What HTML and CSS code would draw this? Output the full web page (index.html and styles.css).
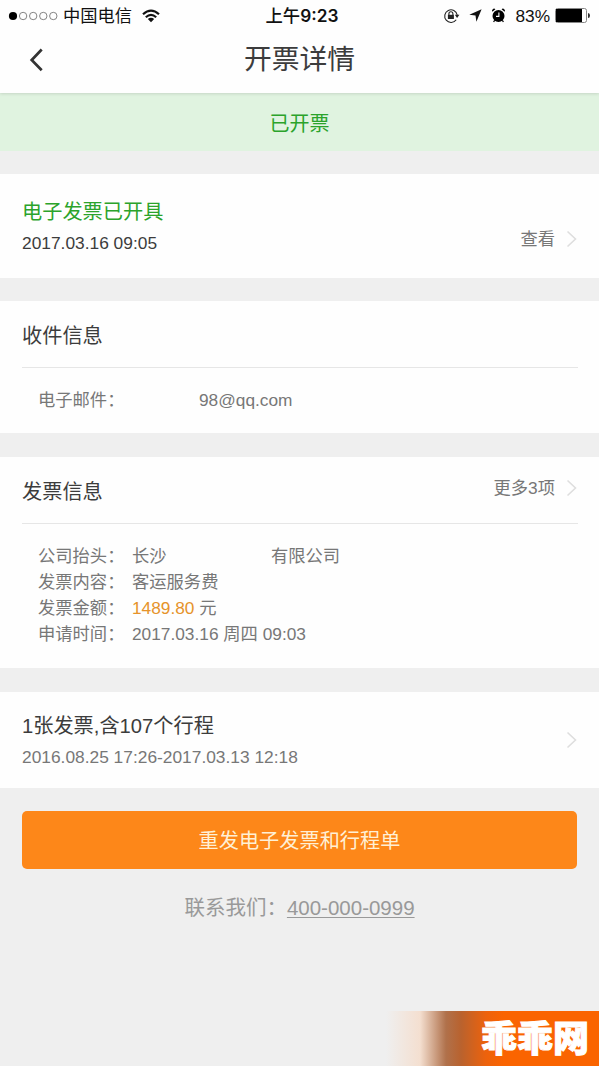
FILE: index.html
```html
<!DOCTYPE html>
<html lang="zh-CN">
<head>
<meta charset="utf-8">
<title>开票详情</title>
<link rel="stylesheet" href="styles.css">
</head>
<body>
<header class="header">
  <div class="status">
    <div class="status-left">
      <svg class="signal" width="50" height="10" viewBox="0 0 50 10"><circle cx="5" cy="5" r="4.1"/><g fill="none" stroke="#666" stroke-width=".8"><circle cx="15.1" cy="5" r="3.7"/><circle cx="25.2" cy="5" r="3.7"/><circle cx="35.3" cy="5" r="3.7"/><circle cx="45.3" cy="5" r="3.7"/></g></svg>
      <span class="carrier">中国电信</span>
      <svg class="wifi" width="18" height="14" viewBox="0 0 18 14" fill="none" stroke="#111" stroke-width="2.2"><path d="M1 5.2Q9-2 17 5.2M3.8 8.2Q9 3.6 14.2 8.2"/><path d="M5.8 10.1Q9 7.2 12.2 10.1L9 13.3Z" fill="#111" stroke="none"/></svg>
    </div>
    <div class="time">上午<b>9:23</b></div>
    <div class="status-right">
      <svg width="17" height="16" viewBox="0 0 17 16" fill="none" stroke="#222"><path d="M13.2 11.7A6.3 6.3 0 1 1 14.2 7" stroke-width="1.1"/><path d="M11.8 6.7H16.4L14.1 10Z" fill="#222" stroke="none"/><path d="M5.9 7V5.7a2 2 0 0 1 4 0V7" stroke-width="1.1"/><rect x="4.9" y="6.8" width="6" height="4.2" fill="#222" stroke="none"/></svg>
      <svg class="arrow" width="13" height="13" viewBox="0 0 13 13"><path d="M12.6.3L7.4 12.7L6.5 6.6L.3 5.7Z" fill="#111"/></svg>
      <svg class="alarm" width="15" height="15" viewBox="0 0 15 15"><circle cx="7.5" cy="8" r="6"/><path d="M1.4 3.8A2 2 0 0 1 4.4 1.2ZM13.6 3.8A2 2 0 0 0 10.6 1.2Z"/><path d="M3.6 12.4L2.6 14M11.4 12.4l1 1.6" stroke="#000" stroke-width="1.2"/><path d="M7.9 4.5V8.4H5" fill="none" stroke="#fff" stroke-width="1.1"/></svg>
      <span class="percent">83%</span>
      <svg class="battery" width="36" height="15" viewBox="0 0 36 15"><rect x=".5" y=".5" width="31" height="14" rx="2" fill="#fff" stroke="#888"/><path d="M1 1H27V14H1Z"/><path d="M33 5q2 0 2 2.5T33 10Z" fill="#333"/></svg>
    </div>
  </div>
  <div class="nav">
    <svg class="back" width="15" height="24" viewBox="0 0 15 24" fill="none" stroke="#333" stroke-width="2.7"><path d="M12.7 1.5L2.7 12L12.7 22.2"/></svg>
    <h1 class="title">开票详情</h1>
  </div>
</header>
<div class="banner">已开票</div>
<main>
  <section class="card issued">
    <div>
      <div class="heading green">电子发票已开具</div>
      <div class="date">2017.03.16 09:05</div>
    </div>
    <div class="link">查看<svg class="chev" width="12" height="18" viewBox="0 0 12 18"><path d="M1.5 1.5L9.5 9L1.5 16.5"/></svg></div>
  </section>
  <section class="card receiver">
    <div class="card-head"><div class="heading">收件信息</div></div>
    <div class="row"><span class="label">电子邮件：</span><span class="mail">98@qq.com</span></div>
  </section>
  <section class="card invoice">
    <div class="card-head"><div class="heading">发票信息</div><div class="link">更多3项<svg class="chev" width="12" height="18" viewBox="0 0 12 18"><path d="M1.5 1.5L9.5 9L1.5 16.5"/></svg></div></div>
    <div class="rows">
      <div class="row"><span class="label">公司抬头：</span><span class="city">长沙</span><span>有限公司</span></div>
      <div class="row"><span class="label">发票内容：</span><span>客运服务费</span></div>
      <div class="row"><span class="label">发票金额：</span><span><span class="amount">1489.80</span> 元</span></div>
      <div class="row"><span class="label">申请时间：</span><span>2017.03.16 周四 09:03</span></div>
    </div>
  </section>
  <section class="card trips">
    <div>
      <div class="heading">1张发票,含107个行程</div>
      <div class="date muted">2016.08.25 17:26-2017.03.13 12:18</div>
    </div>
    <svg class="chev" width="12" height="18" viewBox="0 0 12 18"><path d="M1.5 1.5L9.5 9L1.5 16.5"/></svg>
  </section>
  <button class="resend">重发电子发票和行程单</button>
  <p class="contact">联系我们：<a class="phone">400-000-0999</a></p>
</main>
<div class="watermark">乖乖网</div>
</body>
</html>
```
FILE: styles.css
```css
* { box-sizing: border-box; }
body {
  margin: 0;
  height: 1066px;
  position: relative;
  overflow: hidden;
  background: #efefef;
  color: #3c3c3c;
  font-family: "Liberation Sans", "Noto Sans CJK SC", sans-serif;
  white-space: nowrap;
}
svg { display: block; flex: none; }
.header { position: relative; height: 93px; background: #fefefe; box-shadow: 0 1px 3px rgba(0,0,0,.12); }
.status {
  display: grid;
  grid-template-columns: 1fr auto 1fr;
  align-items: center;
  height: 30px;
  padding: 0 8px;
  color: #111;
}
.status-left, .status-right { display: flex; align-items: center; }
.status-right { justify-content: flex-end; }
.carrier { margin-left: 5px; padding-top: 1px; font-size: 17.3px; line-height: 30px; }
.wifi { margin-left: 10px; }
.time { padding-left: 5px; font: 500 17.3px/30px Inter, "Noto Sans CJK SC", sans-serif; }
.time b { font-weight: 600; }
.arrow { margin-left: 9px; }
.alarm { margin-left: 9px; }
.percent { margin-left: 9px; padding-top: 1px; font: 17.3px/30px "Liberation Sans", sans-serif; }
.battery { margin-left: 5px; }
.nav {
  display: grid;
  grid-template-columns: 1fr auto 1fr;
  align-items: center;
  height: 60px;
  padding: 0 29px;
}
.title { margin: 0; font-size: 27.8px; line-height: 58px; font-weight: 400; }
.banner { height: 58px; background: #e0f3e0; color: #2ba32b; font-size: 20px; line-height: 63px; text-align: center; }
.card { margin-top: 23px; padding: 0 21px 0 22px; background: #fefefe; }
.issued { display: flex; justify-content: space-between; align-items: center; height: 104px; padding-top: 2px; }
.heading { font-size: 20.2px; line-height: 32px; }
.green { color: #2ba32b; }
.date { font-size: 17.35px; line-height: 31px; }
.muted { color: #777; }
.link { display: flex; align-items: center; gap: 11px; color: #777; font-size: 17.3px; line-height: 24px; }
.issued .link { padding-top: 24px; }
.chev { fill: none; stroke: #dedede; stroke-width: 1.6; }
.receiver { height: 132px; }
.card-head { display: flex; justify-content: space-between; align-items: center; height: 67px; border-bottom: 1px solid #e6e6e6; }
.card-head .heading { padding-top: 3px; }
.card-head .link { padding-bottom: 4px; }
.row { display: flex; padding-left: 16px; color: #777; font-size: 17.3px; line-height: 26px; }
.label { width: 94px; flex: none; }
.receiver .row { padding-top: 19px; }
.mail { margin-left: 67px; }
.invoice { height: 211px; margin-top: 24px; }
.rows { padding-top: 19px; }
.city { width: 139px; }
.amount { color: #e6932a; }
.trips { display: flex; justify-content: space-between; align-items: center; height: 96px; margin-top: 24px; }
.trips .heading { padding-top: 2px; }
.resend {
  display: block;
  width: 555px;
  height: 58px;
  margin: 23px 22px 0;
  padding: 1px 0 0;
  border: 0;
  border-radius: 5px;
  background: #fd8719;
  color: #fff0d5;
  font: 20.2px/58px "Liberation Sans", "Noto Sans CJK SC", sans-serif;
}
.contact { margin: 23px 0 0; color: #999; font-size: 20.5px; line-height: 31px; text-align: center; }
.phone { text-decoration: underline; text-decoration-thickness: 1px; text-underline-offset: 2px; }
.watermark {
  position: absolute;
  right: 0;
  bottom: 0;
  width: 213px;
  height: 55px;
  padding-right: 10px;
  background: linear-gradient(90deg, #efefef 0, #f4dfd0 34px, #b0714b 60px, #b9622e 75px, #ed620c 100px, #fa6400 118px);
  color: #fff;
  font: 900 36px/50px "Noto Sans CJK SC", sans-serif;
  -webkit-text-stroke: 1px #fff;
  text-align: right;
}
```
